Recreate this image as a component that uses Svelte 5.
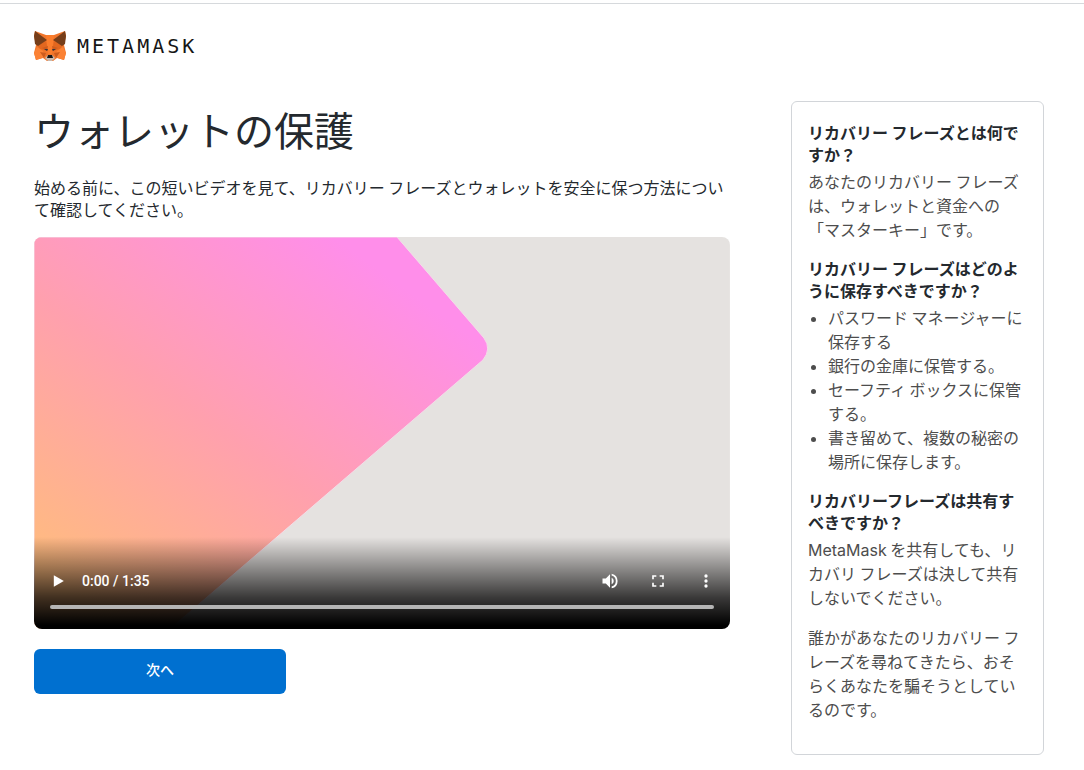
<script>
    let position = $state(0);

    const storageTips = [
        'パスワード マネージャーに保存する',
        '銀行の金庫に保管する。',
        'セーフティ ボックスに保管する。',
        '書き留めて、複数の秘密の場所に保存します。',
    ];

    let elapsed = $derived(
        `${Math.floor(position / 60)}:${String(position % 60).padStart(2, '0')}`
    );
</script>

<div class="page">
    <header>
        <svg class="fox" viewBox="0 0 32 30" aria-hidden="true">
            <path fill="#f0752b" d="M1 0 12 4h8L31 0l1 5-2 9 2 8-2 7-7-2-4 3h-6l-4-3-7 2-2-7 2-8-2-9z" />
            <path fill="#fb7d2c" d="M12 4h8l-1 9-1 10h-4l-1-10z" />
            <path fill="#e2671f" d="M3 14l9-4 2 10-8-2zM29 14l-9-4-2 10 8-2z" />
            <path fill="#763e1a" d="M1 0l12 9-9 6-3-2-1-8zM31 0 19 9l9 6 3-2 1-8z" />
            <path fill="#fb8235" d="M0 22l3-6 6 4 2 6-9 3zM32 22l-3-6-6 4-2 6 9 3z" />
            <path fill="#cd5c1e" d="M8 17l6-2-1 4zM24 17l-6-2 1 4zM6 21l6 1-2 5zM26 21l-6 1 2 5z" />
            <path fill="#33343d" d="M10 18l4 0-1 2zM22 18l-4 0 1 2z" />
            <path fill="#c9b9ad" d="M11 27l3-3h4l3 3-3 3h-4z" />
            <path fill="#161616" d="M14 24h4l1 3h-6z" />
        </svg>
        <span class="wordmark">METAMASK</span>
    </header>

    <main>
        <section class="intro">
            <h1>ウォレットの保護</h1>
            <p class="lead">
                始める前に、この短いビデオを見て、リカバリー フレーズとウォレットを安全に保つ方法について確認してください。
            </p>

            <div class="player">
                <svg class="artwork" viewBox="0 0 696 392" preserveAspectRatio="none" aria-hidden="true">
                    <defs>
                        <linearGradient id="sheet" gradientUnits="userSpaceOnUse" x1="40" y1="360" x2="300" y2="0">
                            <stop offset="0" stop-color="#ffbc7e" />
                            <stop offset="0.5" stop-color="#ffa0ae" />
                            <stop offset="1" stop-color="#ff8eea" />
                        </linearGradient>
                    </defs>
                    <rect width="696" height="392" fill="#e5e2e0" />
                    <path
                        d="M0 0H363L450 101Q458 112 449 123L136 392H0Z"
                        fill="url(#sheet)"
                        stroke="#f3dce8"
                        stroke-width="1"
                    />
                </svg>
                <div class="controls">
                    <div class="buttons">
                        <button class="icon" aria-label="再生">
                            <svg viewBox="0 0 24 24"><path d="M7 5v14l12-7z" /></svg>
                        </button>
                        <span class="time">{elapsed} / 1:35</span>
                        <button class="icon" aria-label="ミュート">
                            <svg viewBox="0 0 24 24">
                                <path d="M3 9v6h4l5 5V4L7 9H3zm13.5 3A4.5 4.5 0 0 0 14 8v8a4.5 4.5 0 0 0 2.5-4zM14 3.2v2.1a7 7 0 0 1 0 13.4v2.1a9 9 0 0 0 0-17.6z" />
                            </svg>
                        </button>
                        <button class="icon" aria-label="全画面表示">
                            <svg viewBox="0 0 24 24">
                                <path d="M7 14H5v5h5v-2H7v-3zm-2-4h2V7h3V5H5v5zm12 7h-3v2h5v-5h-2v3zM14 5v2h3v3h2V5h-5z" />
                            </svg>
                        </button>
                        <button class="icon" aria-label="その他のオプション">
                            <svg viewBox="0 0 24 24">
                                <circle cx="12" cy="6" r="2" />
                                <circle cx="12" cy="12" r="2" />
                                <circle cx="12" cy="18" r="2" />
                            </svg>
                        </button>
                    </div>
                    <input type="range" min="0" max="95" bind:value={position} aria-label="再生位置" />
                </div>
            </div>

            <button class="next">次へ</button>
        </section>

        <aside>
            <h2>リカバリー フレーズとは何ですか？</h2>
            <p>あなたのリカバリー フレーズは、ウォレットと資金への「マスターキー」です。</p>

            <h2>リカバリー フレーズはどのように保存すべきですか？</h2>
            <ul>
                {#each storageTips as tip}
                    <li>{tip}</li>
                {/each}
            </ul>

            <h2>リカバリーフレーズは共有すべきですか？</h2>
            <p><span class="brand">MetaMask</span> を共有しても、リカバリ フレーズは決して共有しないでください。</p>
            <p>誰かがあなたのリカバリー フレーズを尋ねてきたら、おそらくあなたを騙そうとしているのです。</p>
        </aside>
    </main>
</div>

<style>
    :global(body) {
        margin: 0;
        background: #fff;
    }

    .page {
        padding-top: 3px;
        font-family: 'Noto Sans CJK JP', sans-serif;
        font-size: 16px;
        line-height: 22px;
        color: #24292e;
    }

    header {
        display: flex;
        align-items: center;
        gap: 11px;
        padding: 27px 34px 40px;
        border-top: 1px solid #d6d9dc;
    }

    .fox {
        width: 32px;
        height: 30px;
    }

    .wordmark {
        font-family: 'DejaVu Sans Mono', monospace;
        font-size: 20px;
        line-height: 30px;
        letter-spacing: 3px;
        color: #161616;
    }

    main {
        display: grid;
        grid-template-columns: 11fr 4fr;
        align-items: start;
        gap: 61px;
        padding: 0 40px 15px 34px;
    }

    h1 {
        margin: 0;
        font-size: 40px;
        font-weight: 400;
        line-height: 56px;
    }

    .lead {
        margin: 19px 0 17px;
    }

    .player {
        position: relative;
        aspect-ratio: 87 / 49;
        border-radius: 8px;
        overflow: hidden;
    }

    .artwork {
        display: block;
        width: 100%;
        height: 100%;
    }

    .controls {
        position: absolute;
        inset: auto 0 0;
        box-sizing: border-box;
        padding: 20px 0;
        background: linear-gradient(to bottom, transparent, rgba(0, 0, 0, 0.75) 66%, #000 96%);
    }

    .buttons {
        display: flex;
        align-items: center;
    }

    .icon {
        width: 48px;
        height: 48px;
        padding: 0;
        border: none;
        background: none;
        cursor: pointer;
    }

    .icon svg {
        display: block;
        width: 20px;
        height: 20px;
        margin: auto;
        fill: #fff;
    }

    .time {
        flex: 1;
        font-family: Roboto, sans-serif;
        font-size: 14px;
        font-weight: 500;
        color: #fff;
    }

    input {
        display: block;
        width: calc(100% - 32px);
        height: 4px;
        margin: 0 16px;
        border-radius: 2px;
        background: #b5b5b5;
        appearance: none;
        cursor: pointer;
    }

    input::-webkit-slider-thumb {
        appearance: none;
        width: 0;
        height: 0;
    }

    .next {
        display: block;
        width: 252px;
        height: 45px;
        margin-top: 20px;
        padding: 0 0 4px;
        border: none;
        border-radius: 6px;
        background: #0070d0;
        color: #fff;
        font-family: inherit;
        font-size: 14px;
        font-weight: 500;
        cursor: pointer;
    }

    aside {
        padding: 19px 16px 17px;
        border: 1px solid #d2d5d9;
        border-radius: 6px;
        line-height: 24px;
        color: #4d4d4d;
    }

    h2 {
        margin: 0 0 4px;
        font-size: 16px;
        font-weight: 700;
        line-height: 22px;
        color: #24292e;
    }

    aside p {
        margin: 0 0 16px;
    }

    ul {
        margin: 0 0 16px;
        padding-left: 20px;
    }

    li::marker {
        font-size: 14px;
    }

    .brand {
        font-family: Inter, sans-serif;
        line-height: 16px;
    }
</style>
